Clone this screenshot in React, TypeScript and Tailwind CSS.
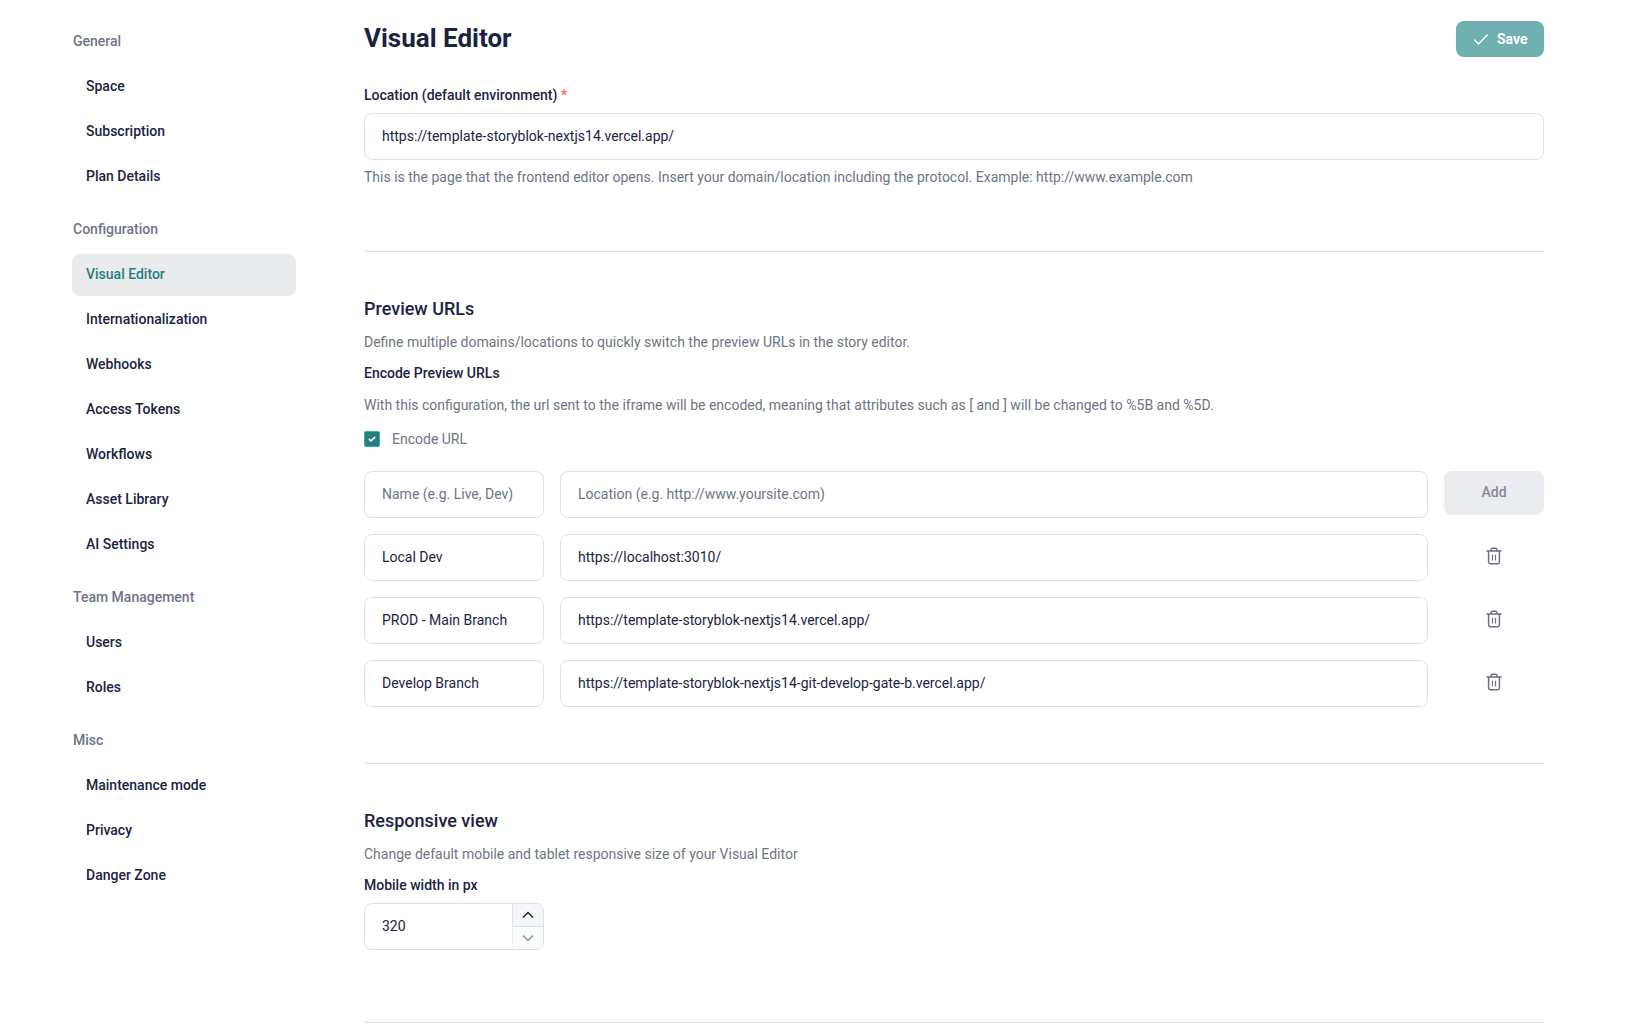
import React from "react";

const NAV = [
  { title: "General", items: ["Space", "Subscription", "Plan Details"] },
  {
    title: "Configuration",
    items: ["Visual Editor", "Internationalization", "Webhooks", "Access Tokens", "Workflows", "Asset Library", "AI Settings"],
  },
  { title: "Team Management", items: ["Users", "Roles"] },
  { title: "Misc", items: ["Maintenance mode", "Privacy", "Danger Zone"] },
];

const URLS = [
  ["Local Dev", "https://localhost:3010/"],
  ["PROD - Main Branch", "https://template-storyblok-nextjs14.vercel.app/"],
  ["Develop Branch", "https://template-storyblok-nextjs14-git-develop-gate-b.vercel.app/"],
];

const FIELD =
  "block h-[47px] rounded-lg border border-[#dfe0e6] bg-white px-[17px] pb-0.5 text-sm text-[#1b243f] outline-none placeholder:text-[#6d7588] placeholder:opacity-100";

function Trash() {
  return (
    <svg width="16" height="18" viewBox="0 0 16 18" fill="none" stroke="#6c7087" strokeWidth="1.5" strokeLinecap="round">
      <path d="M1 4h14" />
      <path d="M5 3.8V3a1.8 1.8 0 0 1 1.8-1.8h2.4A1.8 1.8 0 0 1 11 3v.8" />
      <path d="M2.6 4.2v10.9c0 .9.7 1.6 1.6 1.6h7.6c.9 0 1.6-.7 1.6-1.6V4.2" />
      <path d="M6.5 8v5M9.5 8v5" strokeWidth="1.2" />
    </svg>
  );
}

function Sidebar() {
  return (
    <nav className="flex w-[224px] shrink-0 flex-col gap-[11px] pt-5 text-sm font-medium">
      {NAV.map((g) => (
        <div key={g.title} className="flex flex-col gap-[3px]">
          <div className="flex h-[42px] items-center pl-px text-[#6d7588]">{g.title}</div>
          {g.items.map((item) => (
            <a
              key={item}
              className={
                item === "Visual Editor"
                  ? "mt-px -mb-px flex h-[42px] items-center rounded-lg bg-[#eaebed] pb-0.5 pl-[14px] text-[#267f7f]"
                  : "flex h-[42px] items-center pl-[14px] text-[#1b243f]"
              }
            >
              {item}
            </a>
          ))}
        </div>
      ))}
    </nav>
  );
}

export default function App() {
  return (
    <div className="flex h-[1034px] w-[1629px] gap-[68px] overflow-hidden bg-white pl-[72px] font-['Roboto',sans-serif] text-sm text-[#1b243f]">
      <Sidebar />
      <main className="flex w-[1180px] flex-col">
        <header className="mt-[21px] flex h-9 justify-between">
          <h1 className="text-[26px] leading-[34px] font-bold">Visual Editor</h1>
          <button className="flex h-9 w-[88px] items-center rounded-lg bg-[#6fb0b0] pl-[18px] font-bold text-white">
            <svg width="14" height="11" viewBox="0 0 14 11" fill="none" stroke="white" strokeWidth="1.4" strokeLinecap="round" strokeLinejoin="round">
              <path d="M.8 6l3.8 3.9L13.2 1" />
            </svg>
            <span className="ml-[9px]">Save</span>
          </button>
        </header>
        <label className="mt-7 h-5 leading-5 font-medium">
          Location (default environment) <span className="text-[#ff6159]">*</span>
        </label>
        <input className={`${FIELD} mt-2 w-full`} defaultValue="https://template-storyblok-nextjs14.vercel.app/" />
        <p className="mt-[7px] h-5 leading-5 text-[#6d7588]">
          This is the page that the frontend editor opens. Insert your domain/location including the protocol. Example: http://www.example.com
        </p>
        <hr className="mt-16 border-[#dfe0e6]" />

        <h2 className="mt-[45px] h-6 text-lg leading-6 font-medium">Preview URLs</h2>
        <p className="mt-[11px] h-5 leading-5 text-[#6d7588]">
          Define multiple domains/locations to quickly switch the preview URLs in the story editor.
        </p>
        <h3 className="mt-[11px] h-5 leading-5 font-medium">Encode Preview URLs</h3>
        <p className="mt-3 h-5 leading-5 text-[#6d7588]">
          With this configuration, the url sent to the iframe will be encoded, meaning that attributes such as [ and ] will be changed to %5B and %5D.
        </p>
        <div className="mt-[14px] flex h-5 items-center gap-3 text-[#6d7588]">
          <span className="flex size-4 items-center justify-center rounded-[2px] border border-[#2db5b1] bg-[#267f7f]">
            <svg width="8" height="6" viewBox="0 0 8 6" fill="none" stroke="white" strokeWidth="1.7">
              <path d="M.8 2.8l2.1 2L7.2 1" />
            </svg>
          </span>
          <span>Encode URL</span>
        </div>
        <div className="mt-[22px] grid grid-cols-[180px_868px_100px] gap-4">
          <input className={FIELD} placeholder="Name (e.g. Live, Dev)" />
          <input className={FIELD} placeholder="Location (e.g. http://www.yoursite.com)" />
          <button className="h-11 rounded-lg bg-[#ebecf0] pb-0.5 font-medium text-[#858899]">Add</button>
          {URLS.map(([name, url]) => (
            <React.Fragment key={name}>
              <input className={FIELD} defaultValue={name} />
              <input className={FIELD} defaultValue={url} />
              <button className="flex h-11 items-center justify-center">
                <Trash />
              </button>
            </React.Fragment>
          ))}
        </div>
        <hr className="mt-14 border-[#dfe0e6]" />

        <h2 className="mt-[45px] h-6 text-lg leading-6 font-medium">Responsive view</h2>
        <p className="mt-[11px] h-5 leading-5 text-[#6d7588]">Change default mobile and tablet responsive size of your Visual Editor</p>
        <label className="mt-[11px] h-5 leading-5 font-medium">Mobile width in px</label>
        <div className="mt-2 flex h-[47px] w-[180px] overflow-hidden rounded-lg border border-[#dfe0e6]">
          <input className="min-w-0 flex-1 px-[17px] pb-0.5 outline-none" defaultValue="320" />
          <div className="flex w-[31px] flex-col">
            <button className="flex h-[23px] items-center justify-center border-b border-l border-[#dfe0e6] bg-[#f5f6f9]">
              <svg width="12" height="8" viewBox="0 0 12 8" fill="none" stroke="#1b243f" strokeWidth="1.5">
                <path d="M1 6.5l5-5 5 5" />
              </svg>
            </button>
            <button className="flex flex-1 items-center justify-center border-l border-[#eff0f3] bg-[#fafbfc]">
              <svg width="12" height="8" viewBox="0 0 12 8" fill="none" stroke="#8d919f" strokeWidth="1.5">
                <path d="M1 1.5l5 5 5-5" />
              </svg>
            </button>
          </div>
        </div>
        <hr className="mt-[72px] border-[#dfe0e6]" />
      </main>
    </div>
  );
}
